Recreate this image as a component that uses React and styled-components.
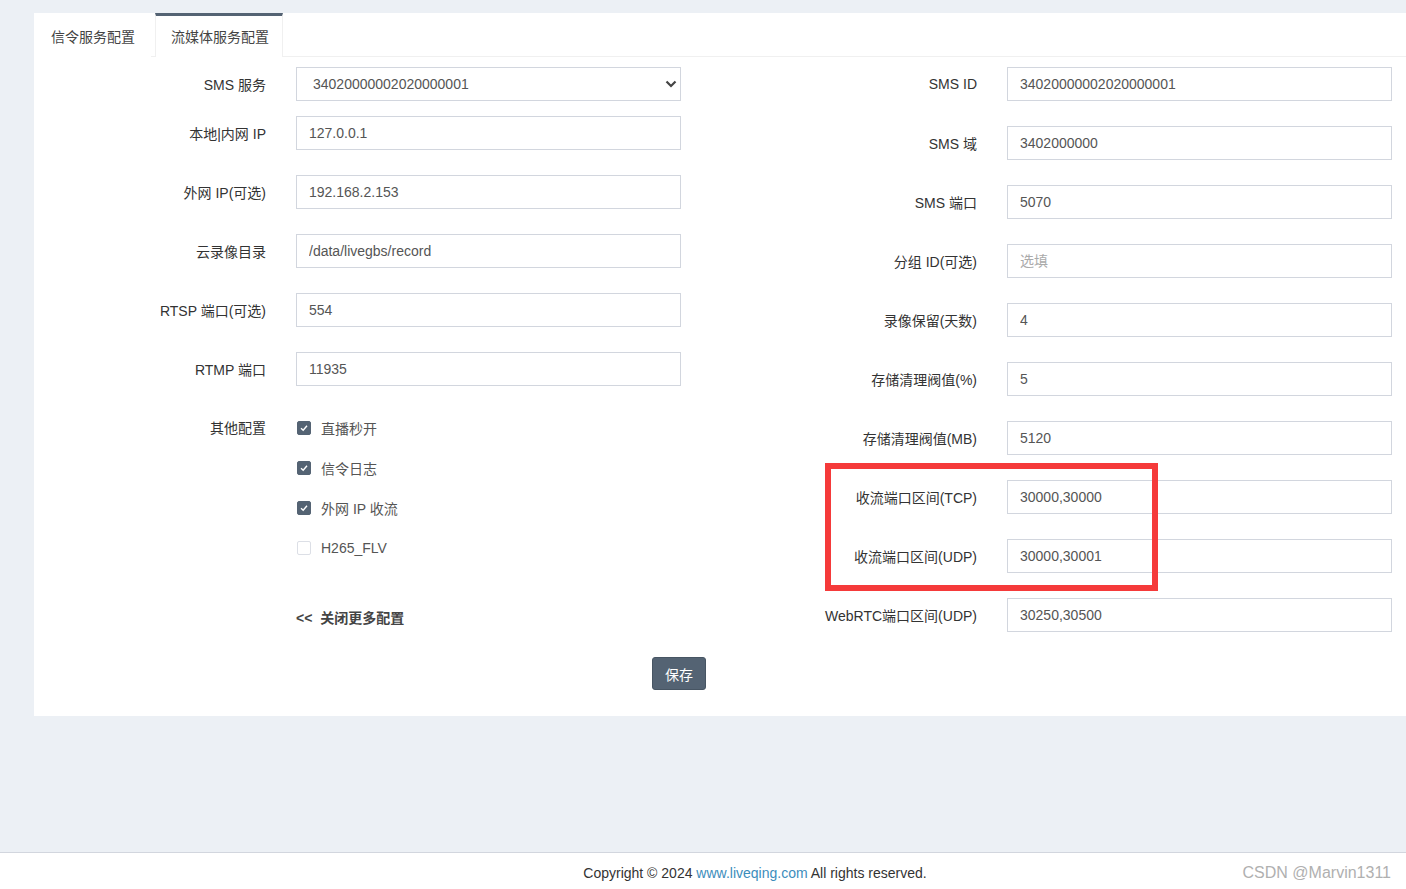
import React from "react";
import styled, { createGlobalStyle } from "styled-components";

const theme = {
    bg: "#ecf0f5",
    dark: "#546373",
    border: "#d2d6de",
    text: "#333",
    input: "#555"
};

const GlobalStyle = createGlobalStyle`
    html, body {
        margin: 0;
        padding: 0;
        overflow: hidden;
    }
    body {
        background: ${theme.bg};
        font-family: "Liberation Sans", "Noto Sans CJK SC", sans-serif;
        font-size: 14px;
        color: ${theme.text};
    }
    * { box-sizing: border-box; }
`;

const leftRows = [
    { label: "本地|内网 IP", value: "127.0.0.1" },
    { label: "外网 IP(可选)", value: "192.168.2.153" },
    { label: "云录像目录", value: "/data/livegbs/record" },
    { label: "RTSP 端口(可选)", value: "554" },
    { label: "RTMP 端口", value: "11935" }
];

const rightRows = [
    { label: "SMS ID", value: "34020000002020000001" },
    { label: "SMS 域", value: "3402000000" },
    { label: "SMS 端口", value: "5070" },
    { label: "分组 ID(可选)", value: "", placeholder: "选填" },
    { label: "录像保留(天数)", value: "4" },
    { label: "存储清理阀值(%)", value: "5" },
    { label: "存储清理阀值(MB)", value: "5120" },
    { label: "收流端口区间(TCP)", value: "30000,30000" },
    { label: "收流端口区间(UDP)", value: "30000,30001" },
    { label: "WebRTC端口区间(UDP)", value: "30250,30500" }
];

const checks = [
    { label: "直播秒开", checked: true },
    { label: "信令日志", checked: true },
    { label: "外网 IP 收流", checked: true },
    { label: "H265_FLV", checked: false }
];

function CheckIcon() {
    return (
        <svg width="10" height="10" viewBox="0 0 10 10">
            <path d="M2 5.2 L4.2 7.2 L8 2.8" fill="none" stroke="#fff" strokeWidth="1.4" />
        </svg>
    );
}

function App() {
    return (
        <Page>
            <GlobalStyle />
            <Content>
                <Card>
                    <Tabs>
                        <Tab>信令服务配置</Tab>
                        <Tab active>流媒体服务配置</Tab>
                    </Tabs>
                    <FormBody>
                        <Column>
                            <Row tight>
                                <Label>SMS 服务</Label>
                                <SelectWrap>
                                    <Select defaultValue="34020000002020000001">
                                        <option>34020000002020000001</option>
                                    </Select>
                                    <Chevron width="12" height="8" viewBox="0 0 12 8">
                                        <path d="M1.5 1.5 L6 6 L10.5 1.5" fill="none" stroke="#444" strokeWidth="2.2" />
                                    </Chevron>
                                </SelectWrap>
                            </Row>
                            {leftRows.map(r => (
                                <Row key={r.label}>
                                    <Label>{r.label}</Label>
                                    <Input defaultValue={r.value} />
                                </Row>
                            ))}
                            <CheckGroup>
                                <GroupLabel>其他配置</GroupLabel>
                                <CheckList>
                                    {checks.map(c => (
                                        <CheckRow key={c.label}>
                                            <Box checked={c.checked}>{c.checked && <CheckIcon />}</Box>
                                            {c.label}
                                        </CheckRow>
                                    ))}
                                    <MoreLink>&lt;&lt;&nbsp; 关闭更多配置</MoreLink>
                                </CheckList>
                            </CheckGroup>
                        </Column>
                        <Column>
                            {rightRows.map(r => (
                                <Row key={r.label}>
                                    <Label>{r.label}</Label>
                                    <Input defaultValue={r.value} placeholder={r.placeholder} />
                                </Row>
                            ))}
                        </Column>
                    </FormBody>
                    <ButtonRow>
                        <SaveButton>保存</SaveButton>
                    </ButtonRow>
                    <Highlight />
                </Card>
            </Content>
            <Footer>
                <FooterText>
                    Copyright © 2024 <FooterLink>www.liveqing.com</FooterLink> All rights reserved.
                </FooterText>
                <Watermark>CSDN @Marvin1311</Watermark>
            </Footer>
        </Page>
    );
}

const Page = styled.div`
    display: flex;
    flex-direction: column;
    height: 100vh;
`;

const Content = styled.div`
    flex: 1;
    padding: 13px 0 0 34px;
`;

const Card = styled.div`
    position: relative;
    background: #fff;
    padding-bottom: 26px;
`;

const Tabs = styled.div`
    display: flex;
    height: 44px;
    border-bottom: 1px solid #f0f0f0;
`;

const Tab = styled.div`
    display: flex;
    align-items: center;
    padding: ${p => (p.active ? "0 13px 1px 15px" : "0 15px 1px 16px")};
    margin-right: ${p => (p.active ? "0" : "4px")};
    margin-bottom: -1px;
    color: #444;
    background: #fff;
    border-top: 3px solid ${p => (p.active ? theme.dark : "transparent")};
    border-left: 1px solid ${p => (p.active ? "#f0f0f0" : "transparent")};
    border-right: 1px solid ${p => (p.active ? "#f0f0f0" : "transparent")};
`;

const FormBody = styled.div`
    display: grid;
    grid-template-columns: 711px 1fr;
    padding-top: 10px;
`;

const Column = styled.div`
    display: flex;
    flex-direction: column;
`;

const Row = styled.div`
    display: flex;
    align-items: center;
    height: 34px;
    margin-bottom: ${p => (p.tight ? "15px" : "25px")};
`;

const Label = styled.div`
    width: 232px;
    margin-right: 30px;
    text-align: right;
    color: ${theme.text};
    white-space: nowrap;
`;

const GroupLabel = styled(Label)`
    line-height: 34px;
`;

const Input = styled.input`
    width: 385px;
    height: 34px;
    border: 1px solid ${theme.border};
    padding: 0 12px;
    font-family: inherit;
    font-size: 14px;
    color: ${theme.input};
    outline: none;
    &::placeholder {
        color: #aaa;
    }
`;

const SelectWrap = styled.div`
    position: relative;
    width: 385px;
    height: 34px;
`;

const Select = styled.select`
    width: 100%;
    height: 100%;
    appearance: none;
    background: #fff;
    border: 1px solid ${theme.border};
    padding: 0 16px;
    font-family: inherit;
    font-size: 14px;
    color: ${theme.input};
    outline: none;
`;

const Chevron = styled.svg`
    position: absolute;
    right: 4px;
    top: 13px;
    pointer-events: none;
`;

const CheckGroup = styled.div`
    display: flex;
    align-items: flex-start;
`;

const CheckList = styled.div`
    display: flex;
    flex-direction: column;
    margin-top: -3px;
`;

const CheckRow = styled.div`
    display: flex;
    align-items: center;
    height: 40px;
    color: #555;
`;

const Box = styled.span`
    display: inline-flex;
    flex: none;
    align-items: center;
    justify-content: center;
    width: 14px;
    height: 14px;
    margin: 0 10px 0 1px;
    border-radius: 2px;
    background: ${p => (p.checked ? theme.dark : "#fff")};
    border: 1px solid ${p => (p.checked ? theme.dark : "#dcdfe6")};
`;

const MoreLink = styled.div`
    margin-top: 40px;
    font-weight: bold;
    color: #444;
    line-height: 20px;
`;

const ButtonRow = styled.div`
    display: flex;
    padding-left: 618px;
`;

const SaveButton = styled.button`
    width: 54px;
    height: 33px;
    background: ${theme.dark};
    color: #fff;
    border: 1px solid #475563;
    border-radius: 3px;
    font-family: inherit;
    font-size: 14px;
`;

const Highlight = styled.div`
    position: absolute;
    left: 791px;
    top: 450px;
    width: 333px;
    height: 128px;
    border: 6.5px solid #f53a3a;
    pointer-events: none;
`;

const Footer = styled.div`
    position: relative;
    height: 37px;
    background: #fff;
    border-top: 1px solid ${theme.border};
    display: flex;
    align-items: center;
    justify-content: center;
    padding: 4px 0 0 104px;
`;

const FooterText = styled.div`
    color: #333;
    font-size: 14px;
`;

const FooterLink = styled.a`
    color: #3c8dbc;
    text-decoration: none;
`;

const Watermark = styled.div`
    position: absolute;
    right: 15px;
    top: 11px;
    color: #b0b0b0;
    font-size: 16px;
`;

export default App;
